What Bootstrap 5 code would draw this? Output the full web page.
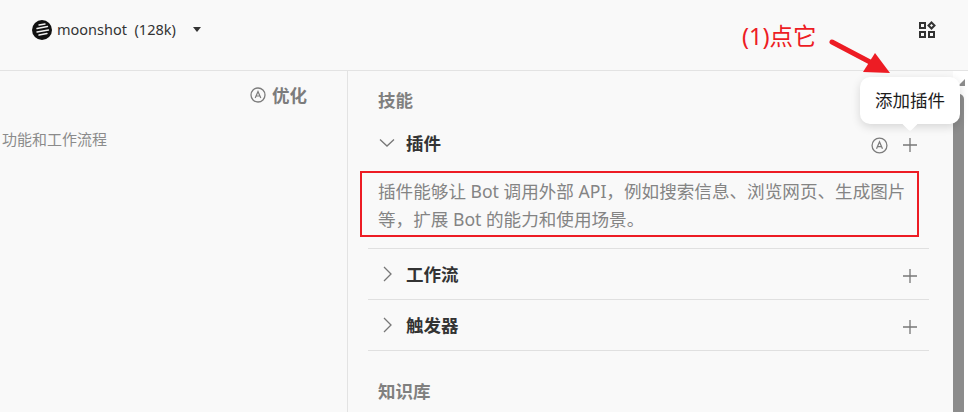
<!DOCTYPE html>
<html lang="zh"><head><meta charset="utf-8">
<link href="https://cdn.jsdelivr.net/npm/bootstrap@5.3.0/dist/css/bootstrap.min.css" rel="stylesheet">
<style>
html,body{height:412px;overflow:hidden;background:#fff}
body{font-family:"Noto Sans","Noto Sans CJK SC",sans-serif;position:relative}
.shell{width:968px;height:412px}
.topbar{height:71px;border-bottom:1px solid #e3e3e3;padding:0 32px;background:#f9f9f9}
.model{font-size:14.5px;color:#333;margin-top:-11px}
.logo{width:20px;height:20px;margin-right:5px}
.caret{width:0;height:0;border:4px solid transparent;border-top:5px solid #333;border-bottom:0;margin-left:17px}
.appsico{width:18px;height:18px;margin-top:-10px}
.panes{height:341px;width:953px;background:#f9f9f9}
.leftpane{width:348px;border-right:1px solid #e3e3e3;padding:13px 40px 0 2px}
.opt{font-size:17.5px;font-weight:700;color:#7c7c7c;gap:6px;height:22px}
.leftdesc{font-size:15px;color:#8b8b8b;margin-top:23px;line-height:20px}
.rightpane{width:605px;padding:18px 24px 0 20px}
.sect{font-size:17.5px;font-weight:700;color:#80807f;line-height:22px;margin-left:10px}
.group{height:51px;border-bottom:1px solid #e0e0e0;padding:0 11px}
.group.first{height:46px;border-bottom:0;margin-top:9px}
.gname{font-size:17.5px;font-weight:700;color:#333;margin-left:11px}
.chev{width:16px;height:16px}
.plus{width:16px;height:16px}
.lowered{margin-top:3px}
.lowered2{margin-top:4px}
.autoico{width:17px;height:17px;margin-right:14px}
.redbox{border:2px solid #ed1c24;margin:5px 10px 11px -8px;padding:4px 16px 3px 16px;font-size:17.6px;line-height:28px;color:#848484;height:66px;white-space:nowrap}
.descwrap{border-bottom:1px solid #e0e0e0}
.sect2{margin-top:29px}
.track{position:absolute;left:953px;top:94px;width:11px;height:318px;background:#8c8c8c;border-top-left-radius:5px;border-top-right-radius:5px}
.trackup{position:absolute;left:958px;top:79px;width:0;height:0;border-style:solid;border-width:0 0 7px 7px;border-color:transparent transparent #8c8c8c transparent}
.tip{position:absolute;left:860px;top:77px;width:100px;height:47px;background:#fff;border-radius:10px;box-shadow:0 3px 10px rgba(0,0,0,.14);font-size:17.5px;color:#1c1c1c;line-height:47px;text-align:center}
.tip::after{content:"";position:absolute;left:44px;bottom:-5px;width:12px;height:12px;background:#fff;transform:rotate(45deg);border-radius:2px}
.note{position:absolute;left:742px;top:21px;font-size:23.5px;line-height:30px;color:#ed1c24}
.arrow{position:absolute;left:826px;top:36px;width:70px;height:40px}
</style></head><body>
<div class="shell">
  <div class="topbar d-flex align-items-center justify-content-between">
    <div class="model d-flex align-items-center">
      <svg class="logo" viewBox="0 0 20 20"><circle cx="10" cy="10" r="10" fill="#111"/><g stroke="#f2f2f2" stroke-width="1.4" stroke-linecap="round"><path d="M7 5 13 4M5 8.500 15.500 6.500M5 12 16.500 10M7 15 15 13.500"/></g></svg>
      <span>moonshot&nbsp;&nbsp;(128k)</span><span class="caret"></span>
    </div>
    <svg class="appsico" viewBox="0 0 18 18" fill="none" stroke="#333" stroke-width="2"><rect x="2" y="2" width="5" height="5"/><rect x="2" y="11" width="5" height="5"/><rect x="11" y="11" width="5" height="5"/><path d="M13.500 1.500 16.500 4.500 13.500 7.500 10.500 4.500Z"/></svg>
  </div>
  <div class="panes d-flex">
    <div class="leftpane">
      <div class="opt d-flex align-items-center justify-content-end">
        <svg width="16" height="16" viewBox="0 0 16 16" fill="none" stroke="#7c7c7c"><circle cx="8" cy="8" r="7" stroke-width="1.300"/><path d="M5.200 11 8 4.500 10.800 11M6.200 9H9.800" stroke-width="1.200"/></svg>
        <span>优化</span>
      </div>
      <div class="leftdesc">功能和工作流程</div>
    </div>
    <div class="rightpane">
      <div class="sect">技能</div>
      <div class="group first d-flex align-items-center justify-content-between">
        <div class="d-flex align-items-center">
          <svg class="chev" viewBox="0 0 16 16" fill="none" stroke="#777" stroke-width="1.300"><path d="M1 4.500 8 11 15 4.500"/></svg>
          <span class="gname">插件</span>
        </div>
        <div class="d-flex align-items-center lowered2">
          <svg class="autoico" viewBox="0 0 16 16" fill="none" stroke="#7c7c7c"><circle cx="8" cy="8" r="7" stroke-width="1.200"/><path d="M5.200 11 8 4.500 10.800 11M6.200 9H9.800" stroke-width="1.200"/></svg>
          <svg class="plus" viewBox="0 0 16 16" stroke="#777" stroke-width="1.300"><path d="M8 1V15M1 8H15"/></svg>
        </div>
      </div>
      <div class="descwrap">
        <div class="redbox">插件能够让 Bot 调用外部 API，例如搜索信息、浏览网页、生成图片<br>等，扩展 Bot 的能力和使用场景。</div>
      </div>
      <div class="group d-flex align-items-center justify-content-between">
        <div class="d-flex align-items-center">
          <svg class="chev" viewBox="0 0 16 16" fill="none" stroke="#777" stroke-width="1.300"><path d="M5 1 12 8 5 15"/></svg>
          <span class="gname">工作流</span>
        </div>
        <svg class="plus lowered" viewBox="0 0 16 16" stroke="#777" stroke-width="1.300"><path d="M8 1V15M1 8H15"/></svg>
      </div>
      <div class="group d-flex align-items-center justify-content-between">
        <div class="d-flex align-items-center">
          <svg class="chev" viewBox="0 0 16 16" fill="none" stroke="#777" stroke-width="1.300"><path d="M5 1 12 8 5 15"/></svg>
          <span class="gname">触发器</span>
        </div>
        <svg class="plus lowered" viewBox="0 0 16 16" stroke="#777" stroke-width="1.300"><path d="M8 1V15M1 8H15"/></svg>
      </div>
      <div class="sect sect2">知识库</div>
    </div>
  </div>
</div>
<div class="track"></div>
<div class="trackup"></div>
<div class="tip">添加插件</div>
<div class="note">(1)点它</div>
<svg class="arrow" viewBox="0 0 70 40"><path d="M6 6 44 26" stroke="#ed1c24" stroke-width="5" stroke-linecap="round"/><path d="M64 37 37 36 49 17Z" fill="#ed1c24"/></svg>
<script src="https://cdn.jsdelivr.net/npm/bootstrap@5.3.0/dist/js/bootstrap.bundle.min.js"></script>
</body></html>
